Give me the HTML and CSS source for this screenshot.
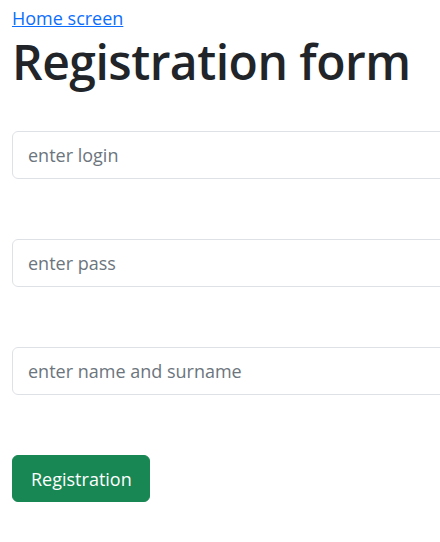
FILE: index.html
```html
<!DOCTYPE html>
<html lang="en">
<head>
<meta charset="utf-8">
<title>Registration form</title>
<link rel="stylesheet" href="styles.css">
</head>
<body>
<div class="page">
  <a class="home-link" href="#">Home screen</a>
  <h1 class="title">Registration form</h1>
  <form class="form">
    <input class="field" type="text" placeholder="enter login">
    <input class="field" type="password" placeholder="enter pass">
    <input class="field" type="text" placeholder="enter name and surname">
    <button class="submit" type="button">Registration</button>
  </form>
</div>
</body>
</html>
```

FILE: styles.css
```css
html, body {
  margin: 0;
  padding: 0;
  overflow: hidden;
  background: #fff;
}

body {
  font-family: "Open Sans", "Noto Sans", sans-serif;
  color: #212529;
}

.page {
  padding: 5px 12px 0;
  width: 520px;
}

.home-link {
  display: inline-block;
  font-size: 18px;
  line-height: 26px;
  color: #0d6efd;
  text-decoration: underline;
}

.title {
  margin: 1px 0 0;
  font-size: 48px;
  font-weight: 600;
  line-height: 60px;
  letter-spacing: -0.5px;
}

.form {
  display: flex;
  flex-direction: column;
  align-items: flex-start;
  gap: 60px;
  margin-top: 39px;
}

.field {
  box-sizing: border-box;
  width: 500px;
  height: 48px;
  padding: 8px 15px;
  border: 1px solid #dee2e6;
  border-radius: 6px;
  font-family: inherit;
  font-size: 18px;
  color: #212529;
  background: #fff;
}

.field::placeholder {
  color: #6c757d;
}

.submit {
  box-sizing: border-box;
  height: 47px;
  padding: 0 17px 0 18px;
  border: 1px solid #198754;
  border-radius: 6px;
  background: #198754;
  color: #fff;
  font-family: inherit;
  font-size: 18px;
}
```
